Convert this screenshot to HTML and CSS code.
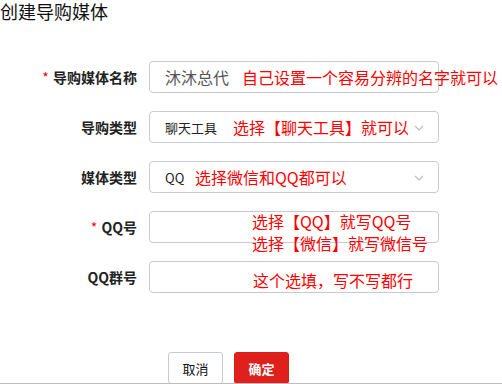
FILE: index.html
```html
<!DOCTYPE html>
<html lang="zh">
<head>
<meta charset="utf-8">
<link rel="stylesheet" href="styles.css">
</head>
<body>
<div class="page">
  <h1 class="title">创建导购媒体</h1>
  <div class="form">
    <label class="label"><span class="req">*</span> 导购媒体名称</label>
    <div class="field">
      <span class="val val-gray">沐沐总代</span>
      <span class="note note-1">自己设置一个容易分辨的名字就可以</span>
    </div>

    <label class="label">导购类型</label>
    <div class="field">
      <span class="val">聊天工具</span>
      <span class="note note-2">选择【聊天工具】就可以</span>
      <svg class="chev" width="10" height="6" viewBox="0 0 10 6"><path d="M1 1 L5 5 L9 1" fill="none" stroke="#b8bcc6" stroke-width="1.1"/></svg>
    </div>

    <label class="label">媒体类型</label>
    <div class="field">
      <span class="val">QQ</span>
      <span class="note note-3">选择微信和QQ都可以</span>
      <svg class="chev" width="10" height="6" viewBox="0 0 10 6"><path d="M1 1 L5 5 L9 1" fill="none" stroke="#b8bcc6" stroke-width="1.1"/></svg>
    </div>

    <label class="label"><span class="req">*</span> QQ号</label>
    <div class="field">
      <span class="note note-4">选择【QQ】就写QQ号<br>选择【微信】就写微信号</span>
    </div>

    <label class="label">QQ群号</label>
    <div class="field">
      <span class="note note-5">这个选填，写不写都行</span>
    </div>
  </div>
  <div class="actions">
    <button class="btn btn-cancel">取消</button>
    <button class="btn btn-ok">确定</button>
  </div>
</div>
</body>
</html>
```
FILE: styles.css
```css
html, body {
  margin: 0;
  padding: 0;
  background: #fff;
}
body {
  font-family: "Noto Sans CJK SC", "Noto Sans", sans-serif;
  color: #303133;
}
.page {
  height: 383px;
  border-bottom: 1px solid #bdbdbd;
  overflow: hidden;
}
.title {
  margin: 0;
  font-size: 18px;
  font-weight: 400;
  line-height: 22px;
  color: #111;
}
.form {
  margin-top: 39px;
  display: grid;
  grid-template-columns: 137px 290px;
  column-gap: 12px;
  row-gap: 18px;
}
.label {
  font-size: 14px;
  font-weight: 700;
  color: #222;
  text-align: right;
  align-self: center;
  line-height: 20px;
}
.req {
  color: #f00;
  font-weight: 400;
  margin-right: 1px;
}
.field {
  position: relative;
  height: 30px;
  border: 1px solid #c6cad6;
  border-radius: 4px;
  display: flex;
  align-items: center;
  padding: 0 15px;
}
.val {
  font-size: 13px;
  color: #222;
}
.val-gray {
  font-size: 16px;
  color: #555;
}
.note {
  position: absolute;
  color: #f00;
  font-size: 16px;
  line-height: 22px;
  white-space: nowrap;
}
.note-1 { left: 92px; top: 4px; }
.note-2 { left: 83px; top: 4px; }
.note-3 { left: 45px; top: 4px; }
.note-4 { left: 102px; top: -2px; }
.note-5 { left: 103px; top: 7px; }
.chev {
  position: absolute;
  right: 14px;
  top: 13px;
}
.actions {
  margin-top: 59px;
  padding-left: 168px;
  display: flex;
  gap: 11px;
}
.btn {
  height: 32px;
  width: 55px;
  border-radius: 3px;
  font-family: "Noto Sans CJK SC", sans-serif;
  font-size: 13px;
  padding: 0;
}
.btn-cancel {
  background: #fff;
  border: 1px solid #c6cad6;
  color: #111;
}
.btn-ok {
  background: #e0201c;
  border: 1px solid #d81e1a;
  color: #fff;
  font-weight: 700;
}
```
